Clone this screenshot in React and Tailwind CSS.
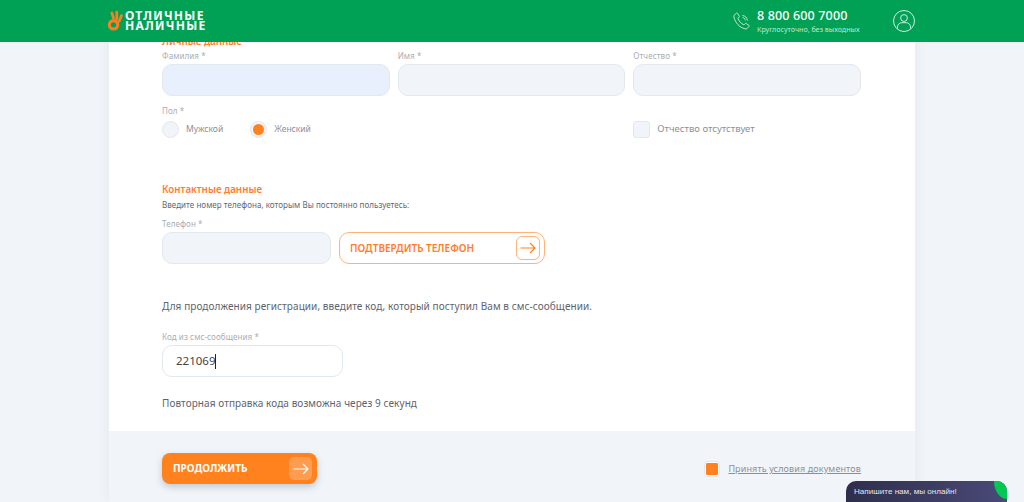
import React from 'react';

const font = "font-['Noto_Sans','Open_Sans',sans-serif]";

const Arrow = ({ color = '#ff821e' }) => (
    <svg width="16" height="12" viewBox="0 0 16 12" fill="none" stroke={color} strokeWidth="1.2">
        <path d="M0.5 6H15M10 1l5 5-5 5" />
    </svg>
);

const Field = ({ label, className = '', bg = 'bg-[#f1f5f9]', children }) => (
    <div className={className}>
        <div className="text-[8px] leading-[12px] tracking-[0.1px] text-[#a9adb3] h-[12px]">{label} *</div>
        <div className={`mt-[2px] h-[32px] rounded-[10px] border border-[#e2e8f0] ${bg}`}>{children}</div>
    </div>
);

const Logo = () => (
    <div className="flex items-center gap-[2px]">
        <svg width="16" height="22" viewBox="0 0 16 22" fill="none">
            <circle cx="6.500" cy="14.800" r="4.200" stroke="#ff7d22" strokeWidth="3.200" />
            <path d="M6.500 8 L4.800 3 M9.800 9 L9.800 2 M12.300 11 L14.500 5.500" stroke="#ff7d22" strokeWidth="2.700" strokeLinecap="round" />
        </svg>
        <div className="text-white font-bold text-[12px] leading-[10.500px] tracking-[1.25px]">
            <div>ОТЛИЧНЫЕ</div>
            <div>НАЛИЧНЫЕ</div>
        </div>
    </div>
);

const PhoneIcon = () => (
    <svg width="18" height="18" viewBox="0 0 18 18" fill="none" stroke="#cfeedd" strokeWidth="0.9">
        <path d="M1.200 3.200 3.400 1.200c.4-.3.9-.2 1.200.2l1.600 2.600c.2.4.2.8-.1 1.100L4.900 6.300c.8 2.600 3.400 5.400 6 6.600l1.200-1.200c.3-.3.8-.4 1.200-.1l2.600 1.700c.4.3.5.8.1 1.200l-2 2c-.5.5-1.200.6-1.800.4C6.200 15.300 2.500 11 .9 5c-.2-.7 0-1.300.3-1.800z" />
        <path d="M9.500 3.500c2.600.2 4.600 2.200 4.900 4.900M9.500 5.500c1.500.2 2.700 1.400 2.900 2.900" />
    </svg>
);

const UserIcon = () => (
    <svg width="22" height="22" viewBox="0 0 22 22" fill="none" stroke="#e4f6ec" strokeWidth="0.9">
        <circle cx="11" cy="11" r="10.500" />
        <circle cx="11" cy="8" r="3.400" />
        <path d="M4.500 18.500v-1.500c0-2.600 2-4.300 4.300-4.300h4.400c2.300 0 4.300 1.700 4.300 4.300v1.500" />
    </svg>
);

export default function App() {
    return (
        <div className={`relative h-[502px] overflow-hidden bg-[#f1f5f9] ${font}`}>
            {/* header sits over the scrolled form */}
            <header className="absolute top-0 left-0 right-0 z-10 h-[42px] bg-[#00a155] flex items-center pl-[107px] pr-[109px]">
                <Logo />
                <div className="ml-auto flex items-center">
                    <PhoneIcon />
                    <div className="ml-[6px] text-white w-[103px]">
                        <div className="text-[12.500px] leading-[16px] tracking-[0.15px] font-medium">8 800 600 7000</div>
                        <div className="text-[7.100px] leading-[10px] whitespace-nowrap text-[#bfe8d2]">Круглосуточно, без выходных</div>
                    </div>
                    <div className="ml-[33px]"><UserIcon /></div>
                </div>
            </header>

            <main className="ml-[109px] w-[806px] shadow-[0_0_12px_rgba(148,163,184,0.15)]">
                <section className="bg-white h-[431px] pl-[53px] pr-[54px] pt-[35px]">
                    <h2 className="text-[9.800px] leading-[14px] font-semibold text-[#ff7d2d] h-[14px]">Личные данные</h2>

                    <div className="mt-[1px] grid grid-cols-3 gap-[8px]">
                        <Field label="Фамилия" bg="bg-[#e8f0fe]" />
                        <Field label="Имя" />
                        <Field label="Отчество" />
                    </div>

                    <div className="mt-[9px] text-[8px] leading-[12px] tracking-[0.1px] text-[#a9adb3]">Пол *</div>
                    <div className="mt-[4px] grid grid-cols-3 gap-[8px] h-[16px] items-center">
                        <div className="col-span-2 flex items-center">
                            <span className="w-[17px] h-[17px] rounded-full bg-[#f1f5f9] border border-[#e2e8f0]" />
                            <span className="ml-[7px] text-[8.500px] text-[#8b9097]">Мужской</span>
                            <span className="ml-[27px] w-[17px] h-[17px] rounded-full bg-[#f1f5f9] border border-[#e2e8f0] flex items-center justify-center">
                                <span className="w-[11px] h-[11px] rounded-full bg-[#ff821e]" />
                            </span>
                            <span className="ml-[7px] text-[8.500px] text-[#8b9097]">Женский</span>
                        </div>
                        <div className="flex items-center">
                            <span className="w-[17px] h-[17px] rounded-[3px] bg-[#f1f5f9] border border-[#e2e8f0]" />
                            <span className="ml-[7px] text-[9.500px] text-[#8b9097]">Отчество отсутствует</span>
                        </div>
                    </div>

                    <h2 className="mt-[46px] text-[9.800px] leading-[14px] font-semibold text-[#ff7d2d]">Контактные данные</h2>
                    <p className="mt-[1px] text-[8px] leading-[13px] tracking-[0.05px] text-[#62676e]">Введите номер телефона, которым Вы постоянно пользуетесь:</p>

                    <div className="mt-[7px] flex items-end gap-[8px]">
                        <Field label="Телефон" className="w-[169px]" />
                        <button className="w-[206px] h-[32px] rounded-[10px] border border-[#ffb27a] bg-white flex items-center pl-[10px] pr-[4px]">
                            <span className="text-[10px] font-semibold text-[#ff7d2d]">ПОДТВЕРДИТЬ ТЕЛЕФОН</span>
                            <span className="ml-auto w-[24px] h-[24px] rounded-[6px] border border-[#ffb27a] flex items-center justify-center">
                                <Arrow />
                            </span>
                        </button>
                    </div>

                    <p className="mt-[34px] text-[10px] leading-[16px] tracking-[0.08px] text-[#5f646b]">Для продолжения регистрации, введите код, который поступил Вам в смс-сообщении.</p>

                    <Field label="Код из смс-сообщения" bg="bg-white" className="mt-[17px] w-[181px]">
                        <div className="pl-[13px] h-full flex items-center text-[11.500px] text-[#3f444a]">
                            221069<span className="w-px h-[15px] bg-[#222]" />
                        </div>
                    </Field>

                    <p className="mt-[18px] text-[10px] leading-[16px] tracking-[0.08px] text-[#5f646b]">Повторная отправка кода возможна через 9 секунд</p>
                </section>

                <section className="h-[71px] bg-[#f1f5f9] pl-[53px] pr-[54px] pt-[22px] flex items-start">
                    <button className="w-[155px] h-[31px] rounded-[8px] bg-[#ff821e] shadow-[0_3px_7px_rgba(100,116,139,0.35)] flex items-center pl-[11px] pr-[5px]">
                        <span className="text-[10px] font-bold text-white">ПРОДОЛЖИТЬ</span>
                        <span className="ml-auto w-[23px] h-[23px] rounded-[5px] bg-[#ff9c4f] flex items-center justify-center">
                            <Arrow color="#ffffff" />
                        </span>
                    </button>
                    <div className="ml-auto flex items-center h-[32px]">
                        <span className="w-[16px] h-[16px] rounded-[3px] border border-[#e2e8f0] bg-white flex items-center justify-center">
                            <span className="w-[12px] h-[12px] rounded-[1px] bg-[#ff821e]" />
                        </span>
                        <a className="ml-[8px] text-[9px] tracking-[0.12px] text-[#8b9097] underline">Принять условия документов</a>
                    </div>
                </section>
            </main>

            {/* chat widget */}
            <div className="absolute left-[846px] top-[481px] w-[161px] h-[40px] rounded-t-[10px] overflow-hidden bg-gradient-to-r from-[#2e2e4c] to-[#4a4a78] pl-[8px] pt-[5px] text-[8.100px] leading-[12px] text-[#e6e6ee] font-['Liberation_Sans',sans-serif]">
                Напишите нам, мы онлайн!
                <span className="absolute right-0 top-0 w-[13px] h-[18px] rounded-bl-[100%] bg-[#00c853]" />
            </div>
        </div>
    );
}
